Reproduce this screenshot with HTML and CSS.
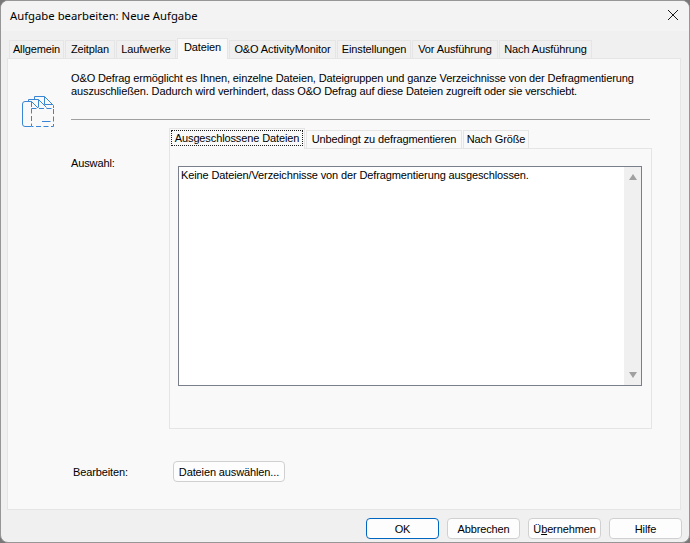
FILE: index.html
```html
<!DOCTYPE html>
<html lang="de">
    <head>
        <meta charset="UTF-8" />
        <title>Aufgabe bearbeiten: Neue Aufgabe</title>
        <link rel="stylesheet" href="styles.css">
    </head>
    <body>
        <div class="dialog">
            <!-- Title bar -->
            <div class="titlebar">
                <span>Aufgabe bearbeiten: Neue Aufgabe</span>
                <svg class="close" width="12" height="12" viewBox="0 0 12 12">
                    <path d="M1 1 L11 11 M11 1 L1 11" stroke="#1a1a1a" stroke-width="1" fill="none" />
                </svg>
            </div>

            <!-- Main tabs -->
            <div class="tabs">
                <div class="tab t1">Allgemein</div>
                <div class="tab t2">Zeitplan</div>
                <div class="tab t3">Laufwerke</div>
                <div class="tab t4 active">Dateien</div>
                <div class="tab t5">O&amp;O ActivityMonitor</div>
                <div class="tab t6">Einstellungen</div>
                <div class="tab t7">Vor Ausführung</div>
                <div class="tab t8">Nach Ausführung</div>
            </div>

            <div class="panel">
                <div class="intro">
                    <svg class="intro-icon" width="32" height="32" viewBox="0 0 32 32" fill="none" stroke="#3a86d6" stroke-width="1">
                        <path d="M12.5 3 V0.5 H22.5 L31.5 9.5 V12" />
                        <path d="M22.5 0.5 V8.5 H31" />
                        <path d="M6.5 5 V3.5 H16.5 L24.5 11.5" />
                        <path d="M16.5 3.5 V11.5" />
                        <path d="M9.5 5.5 H3 Q0.5 5.5 0.5 8 V28 Q0.5 30.5 3 30.5 H9" />
                        <path d="M9.5 5.5 L16 12 M9.5 5.5 V11" />
                        <path d="M9.5 12.5 H31.5 V30.5 H9.5 Z" stroke-dasharray="5 2.5" />
                        <path d="M20 25.5 H28.5" />
                    </svg>
                    <div class="intro-right">
                        <p class="intro-text">O&amp;O Defrag ermöglicht es Ihnen, einzelne Dateien, Dateigruppen und ganze Verzeichnisse von der Defragmentierung<br>auszuschließen. Dadurch wird verhindert, dass O&amp;O Defrag auf diese Dateien zugreift oder sie verschiebt.</p>
                        <div class="line"></div>
                    </div>
                </div>

                <div class="selection">
                    <div class="selection-label">Auswahl:</div>
                    <div class="selection-right">
                        <div class="subtabs">
                            <div class="subtab s1 active"><span class="focus">Ausgeschlossene Dateien</span></div>
                            <div class="subtab s2">Unbedingt zu defragmentieren</div>
                            <div class="subtab s3">Nach Größe</div>
                        </div>
                        <div class="subpanel">
                            <div class="listbox">
                                <div class="list-text">Keine Dateien/Verzeichnisse von der Defragmentierung ausgeschlossen.</div>
                                <div class="scrollbar">
                                    <span class="arrow-up"></span>
                                    <span class="arrow-down"></span>
                                </div>
                            </div>
                        </div>
                    </div>
                </div>

                <div class="edit-row">
                    <div class="edit-label">Bearbeiten:</div>
                    <button class="btn pick">Dateien auswählen...</button>
                </div>
            </div>

            <!-- Dialog buttons -->
            <div class="footer">
                <button class="btn wide primary">OK</button>
                <button class="btn wide">Abbrechen</button>
                <button class="btn wide">Ü<u>b</u>ernehmen</button>
                <button class="btn wide">Hilfe</button>
            </div>
        </div>
    </body>
</html>
```

FILE: styles.css
```css
html, body {
    margin: 0;
    height: 100%;
    background-color: rgb(120, 120, 120);
}

body {
    font-family: "Liberation Sans", "DejaVu Sans", sans-serif;
    font-size: 11px;
    letter-spacing: -0.12px;
    color: rgb(0, 0, 0);
    overflow: hidden;
}

.dialog {
    box-sizing: border-box;
    width: 690px;
    height: 543px;
    border: 1px solid rgb(150, 150, 150);
    border-radius: 8px;
    background-color: rgb(240, 240, 240);
    overflow: hidden;
}

/* Title bar */
.titlebar {
    box-sizing: border-box;
    height: 30px;
    display: flex;
    align-items: center;
    justify-content: space-between;
    padding: 0 9px 2px 9px;
    background-color: rgb(243, 243, 243);
    font-family: "Noto Sans", sans-serif;
    font-size: 11.3px;
    letter-spacing: 0;
}

.close {
    margin-right: 1px;
}

/* Main tabs */
.tabs {
    display: flex;
    height: 27px;
    padding-left: 8px;
    align-items: flex-end;
}

.tab {
    box-sizing: border-box;
    height: 18px;
    line-height: 17px;
    text-align: center;
    border: 1px solid rgb(229, 229, 229);
    border-bottom: none;
    margin-right: 1px;
    white-space: nowrap;
    background-color: rgb(240, 240, 240);
}

.tab.active {
    height: 21px;
    line-height: 17px;
    background-color: rgb(249, 249, 249);
    margin-bottom: -1px;
    position: relative;
}

.t1 { width: 55px; }
.t2 { width: 50px; }
.t3 { width: 60px; }
.t4 { width: 51px; }
.t5 { width: 107px; }
.t6 { width: 74px; }
.t7 { width: 86px; }
.t8 { width: 93px; }

.panel {
    box-sizing: border-box;
    width: 674px;
    height: 452px;
    margin-left: 6px;
    border: 1px solid rgb(229, 229, 229);
    background-color: rgb(249, 249, 249);
}

/* Intro */
.intro {
    display: flex;
    padding-left: 14px;
    height: 70px;
}

.intro-icon {
    margin-top: 37px;
    margin-right: 17px;
    flex: none;
}

.intro-text {
    margin: 13px 0 0 0;
    line-height: 13px;
    white-space: nowrap;
}

.line {
    margin-top: 21px;
    width: 579px;
    height: 1px;
    background-color: rgb(160, 160, 160);
}

/* Selection area */
.selection {
    display: flex;
    padding-left: 63px;
}

.selection-label {
    width: 98px;
    padding-top: 28px;
}

.subtabs {
    display: flex;
    height: 19px;
    align-items: flex-end;
}

.subtab {
    box-sizing: border-box;
    height: 18px;
    line-height: 17px;
    text-align: center;
    border: 1px solid rgb(229, 229, 229);
    border-bottom: none;
    margin-right: 1px;
    white-space: nowrap;
}

.subtab.active {
    height: 21px;
    margin-bottom: -1px;
    background-color: rgb(249, 249, 249);
    position: relative;
    padding: 1px;
}

.focus {
    display: block;
    height: 16px;
    line-height: 14px;
    box-sizing: border-box;
    border: 1px dotted rgb(30, 30, 30);
}

.s1 { width: 136px; }
.s2 { width: 156px; }
.s3 { width: 66px; }

.subpanel {
    box-sizing: border-box;
    width: 483px;
    height: 281px;
    border: 1px solid rgb(229, 229, 229);
    padding: 17px 0 0 8px;
}

.listbox {
    box-sizing: border-box;
    width: 464px;
    height: 220px;
    display: flex;
    justify-content: space-between;
    border: 1px solid rgb(122, 127, 140);
    background-color: rgb(255, 255, 255);
}

.list-text {
    padding: 2px 0 0 2px;
}

.scrollbar {
    width: 17px;
    background-color: rgb(240, 240, 240);
    display: flex;
    flex-direction: column;
    justify-content: space-between;
    align-items: center;
    padding: 7px 0;
}

.arrow-up {
    width: 0;
    height: 0;
    border-left: 4px solid transparent;
    border-right: 4px solid transparent;
    border-bottom: 6px solid rgb(160, 160, 160);
}

.arrow-down {
    width: 0;
    height: 0;
    border-left: 4px solid transparent;
    border-right: 4px solid transparent;
    border-top: 6px solid rgb(160, 160, 160);
}

/* Edit row */
.edit-row {
    display: flex;
    align-items: center;
    padding: 32px 0 0 65px;
}

.edit-label {
    width: 100px;
}

/* Buttons */
.btn {
    box-sizing: border-box;
    height: 21px;
    padding: 0;
    border: 1px solid rgb(208, 208, 208);
    border-radius: 4px;
    background-color: rgb(253, 253, 253);
    color: rgb(0, 0, 0);
    font-family: inherit;
    font-size: 11px;
    letter-spacing: inherit;
    white-space: nowrap;
}

.pick {
    width: 112px;
}

.footer {
    display: flex;
    justify-content: flex-end;
    gap: 8px;
    padding: 8px 7px 0 0;
}

.wide {
    width: 73px;
}

.primary {
    border-color: rgb(0, 103, 192);
}
```
